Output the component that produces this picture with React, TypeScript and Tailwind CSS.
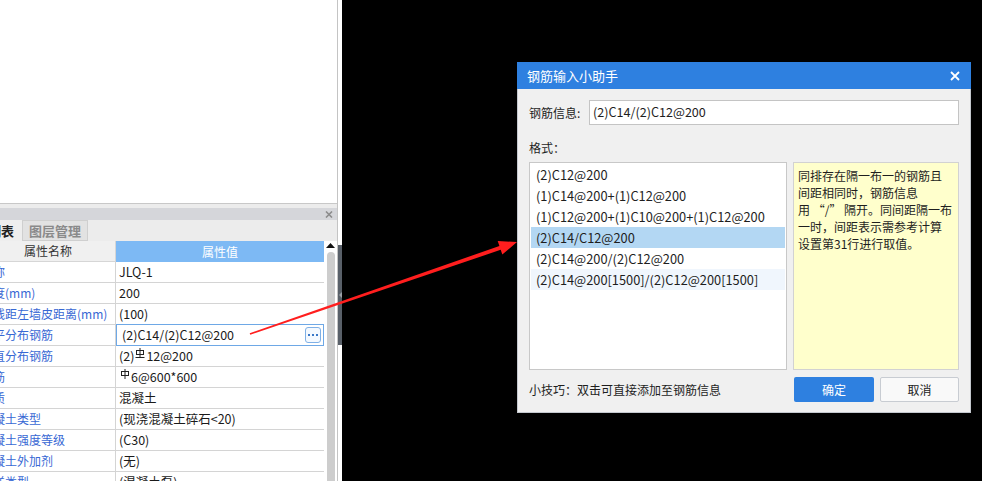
import React from "react";

const rows: { name: string; value: React.ReactNode; edit?: boolean }[] = [
  { name: "名称", value: "JLQ-1" },
  { name: "厚度(mm)", value: "200" },
  { name: "轴线距左墙皮距离(mm)", value: "(100)" },
  { name: "水平分布钢筋", value: "(2)C14/(2)C12@200", edit: true },
  { name: "垂直分布钢筋", value: "g1" },
  { name: "拉筋", value: "g2" },
  { name: "材质", value: "混凝土" },
  { name: "混凝土类型", value: "(现浇混凝土碎石<20)" },
  { name: "混凝土强度等级", value: "(C30)" },
  { name: "混凝土外加剂", value: "(无)" },
  { name: "泵送类型", value: "(混凝土泵)" },
];

function Glyph({ kind }: { kind: 1 | 2 }) {
  return (
    <svg width="10" height="11" viewBox="0 0 10 11" className="inline-block align-top mt-[2px] mx-[1px]">
      <line x1="5" y1="0" x2="5" y2={kind === 1 ? 9 : 10} stroke="#222" strokeWidth="1" />
      <rect x="1.5" y="2.5" width="7" height="4" fill="none" stroke="#222" strokeWidth="1" />
      {kind === 1 && <line x1="0.5" y1="9.5" x2="9.5" y2="9.5" stroke="#222" strokeWidth="1" />}
    </svg>
  );
}

function renderValue(v: React.ReactNode) {
  if (v === "g1")
    return (
      <span>
        (2)<Glyph kind={1} />12@200
      </span>
    );
  if (v === "g2")
    return (
      <span>
        <Glyph kind={2} />6@600*600
      </span>
    );
  return v;
}

const items = [
  "(2)C12@200",
  "(1)C14@200+(1)C12@200",
  "(1)C12@200+(1)C10@200+(1)C12@200",
  "(2)C14/C12@200",
  "(2)C14@200/(2)C12@200",
  "(2)C14@200[1500]/(2)C12@200[1500]",
];

export default function App() {
  return (
    <div className="relative w-[982px] h-[481px] bg-black flex overflow-hidden font-['Microsoft_YaHei','Noto_Sans_CJK_SC',sans-serif] text-[12px]">
      {/* Left panel */}
      <div className="w-[338px] h-full flex flex-col border-r border-[#c4c4c4] bg-[#ececec]">
        <div className="h-[204px] bg-white border-b border-[#c8c8c8]" />
        <div className="h-[4px] bg-[#ececec]" />
        <div className="h-[12px] bg-[#d5d6da] flex items-center justify-end pr-[4px]">
          <svg width="8" height="7" viewBox="0 0 8 7">
            <path d="M1 0.5 L7 6.5 M7 0.5 L1 6.5" stroke="#8c8c8c" strokeWidth="1.6" />
          </svg>
        </div>
        <div className="h-[21px] bg-[#ececec] flex items-stretch">
          <div className="w-[22px] overflow-hidden flex items-center justify-end pr-[8px] text-[13px] font-bold text-[#222] bg-[#eeeeee] whitespace-nowrap">
            <span>列表</span>
          </div>
          <div className="w-[66px] flex items-center justify-center bg-[#e2e2e2] border border-[#cfcfcf] text-[13px] font-bold text-[#8a8a8a]">
            图层管理
          </div>
        </div>
        <div className="flex-1 flex overflow-hidden bg-white">
          <div className="w-[324px] flex flex-col">
            <div className="h-[21px] flex shrink-0">
              <div className="w-[116px] bg-[#f0f0f0] border-r border-b border-[#d6d6d6] overflow-hidden">
                <div className="ml-[-19px] w-[134px] text-center leading-[20px] text-[12px] text-[#333]">属性名称</div>
              </div>
              <div className="flex-1 bg-[#7db9f4] text-white text-center leading-[21px] text-[12px]">属性值</div>
            </div>
            {rows.map((r, i) => (
              <div key={i} className="h-[21px] flex shrink-0 border-b border-[#d4d4d4]">
                <div className="w-[116px] border-r border-[#d4d4d4] overflow-hidden">
                  <div className="ml-[-19px] whitespace-nowrap leading-[20px] text-[12px] text-[#3868d4]">{r.name}</div>
                </div>
                <div className="relative flex-1 pl-[3px] leading-[20px] text-[12.5px] text-[#1a1a1a] whitespace-nowrap">
                  {r.edit ? (
                    <div className="absolute left-0 right-0 -top-px -bottom-px border border-[#6ea8e6] flex items-center pl-[5px] bg-white">
                      <span className="flex-1">{r.value}</span>
                      <div className="w-[16px] h-[16px] mr-[2px] rounded-[3px] border border-[#7fb0e6] bg-[#f4f9ff] flex items-center justify-center gap-[2px]">
                        <span className="w-[2px] h-[2px] bg-[#3a78c8]" />
                        <span className="w-[2px] h-[2px] bg-[#3a78c8]" />
                        <span className="w-[2px] h-[2px] bg-[#3a78c8]" />
                      </div>
                    </div>
                  ) : (
                    renderValue(r.value)
                  )}
                </div>
              </div>
            ))}
          </div>
          {/* scrollbar */}
          <div className="w-[13px] flex flex-col items-center pt-[2px] bg-white">
            <svg width="9" height="5" viewBox="0 0 9 5">
              <path d="M0 5 L4.5 0 L9 5 Z" fill="#111" />
            </svg>
            <div className="mt-[4px] w-[8px] flex-1 bg-[#cdcdcd] rounded-t-[4px]" />
          </div>
        </div>
      </div>
      {/* splitter column */}
      <div className="w-[4px] h-full bg-white flex flex-col">
        <div className="h-[245px] bg-white" />
        <div className="h-[100px] bg-[#596069] flex items-center justify-center">
          <svg width="3" height="6" viewBox="0 0 3 6">
            <path d="M3 0 L0 3 L3 6 Z" fill="#9aa0a8" />
          </svg>
        </div>
      </div>

      {/* Dialog */}
      <div className="absolute left-[517px] top-[62px] w-[454px] h-[351px] flex flex-col">
        <div className="h-[27px] bg-[#2e80e0] flex items-center justify-between pl-[10px] pr-[11px]">
          <span className="text-white text-[13px]">钢筋输入小助手</span>
          <svg width="10" height="10" viewBox="0 0 10 10">
            <path d="M1 1 L9 9 M9 1 L1 9" stroke="#fff" strokeWidth="1.8" />
          </svg>
        </div>
        <div className="flex-1 bg-[#f0f0f0] border-x border-b border-[#c4c8ce] px-[11px] pt-[11px] flex flex-col text-[#1e1e1e]">
          <div className="h-[25px] flex items-center">
            <span className="w-[60px] text-[12px]">钢筋信息:</span>
            <div className="flex-1 h-[25px] bg-white border border-[#c4c4c4] flex items-center pl-[3px] text-[12.6px]">
              (2)C14/(2)C12@200
            </div>
          </div>
          <div className="mt-[15px] h-[16px] leading-[16px] text-[12px]">格式：</div>
          <div className="mt-[6px] h-[208px] flex gap-[6px]">
            <div className="w-[258px] h-full bg-white border border-[#c8c8c8] px-[1px] pt-[1px] flex flex-col">
              {items.map((t, i) => (
                <div
                  key={i}
                  className={
                    "h-[21px] leading-[21px] pl-[5px] text-[12.8px] whitespace-nowrap " +
                    (i === 3 ? "bg-[#b3d7f3]" : i === 5 ? "bg-[#f0f6fd]" : "")
                  }
                >
                  {t}
                </div>
              ))}
            </div>
            <div className="w-[166px] h-full bg-[#ffffcc] border border-[#d2d2d2] pl-[4px] pt-[4px] text-[12px] leading-[17px] whitespace-nowrap">
              同排存在隔一布一的钢筋且
              <br />
              间距相同时，钢筋信息
              <br />
              用 “/” 隔开。同间距隔一布
              <br />
              一时，间距表示需参考计算
              <br />
              设置第31行进行取值。
            </div>
          </div>
          <div className="mt-[7px] h-[25px] flex items-center">
            <span className="flex-1 text-[12px]">小技巧：双击可直接添加至钢筋信息</span>
            <button className="w-[80px] h-[25px] bg-[#2e80e0] rounded-[2px] text-white text-[12px]">确定</button>
            <button className="ml-[6px] w-[79px] h-[25px] bg-[#f9f9f9] border border-[#c8ccd2] rounded-[2px] text-[#222] text-[12px]">
              取消
            </button>
          </div>
        </div>
      </div>

      {/* Red arrow */}
      <svg className="absolute left-0 top-0 pointer-events-none" width="982" height="481" viewBox="0 0 982 481">
        <polygon
          points="249.7,333.2 499.4,246.0 497.7,241.0 517,242 502.3,254.5 500.7,249.8 250.3,334.8"
          fill="#ff1e1e"
        />
      </svg>
    </div>
  );
}
